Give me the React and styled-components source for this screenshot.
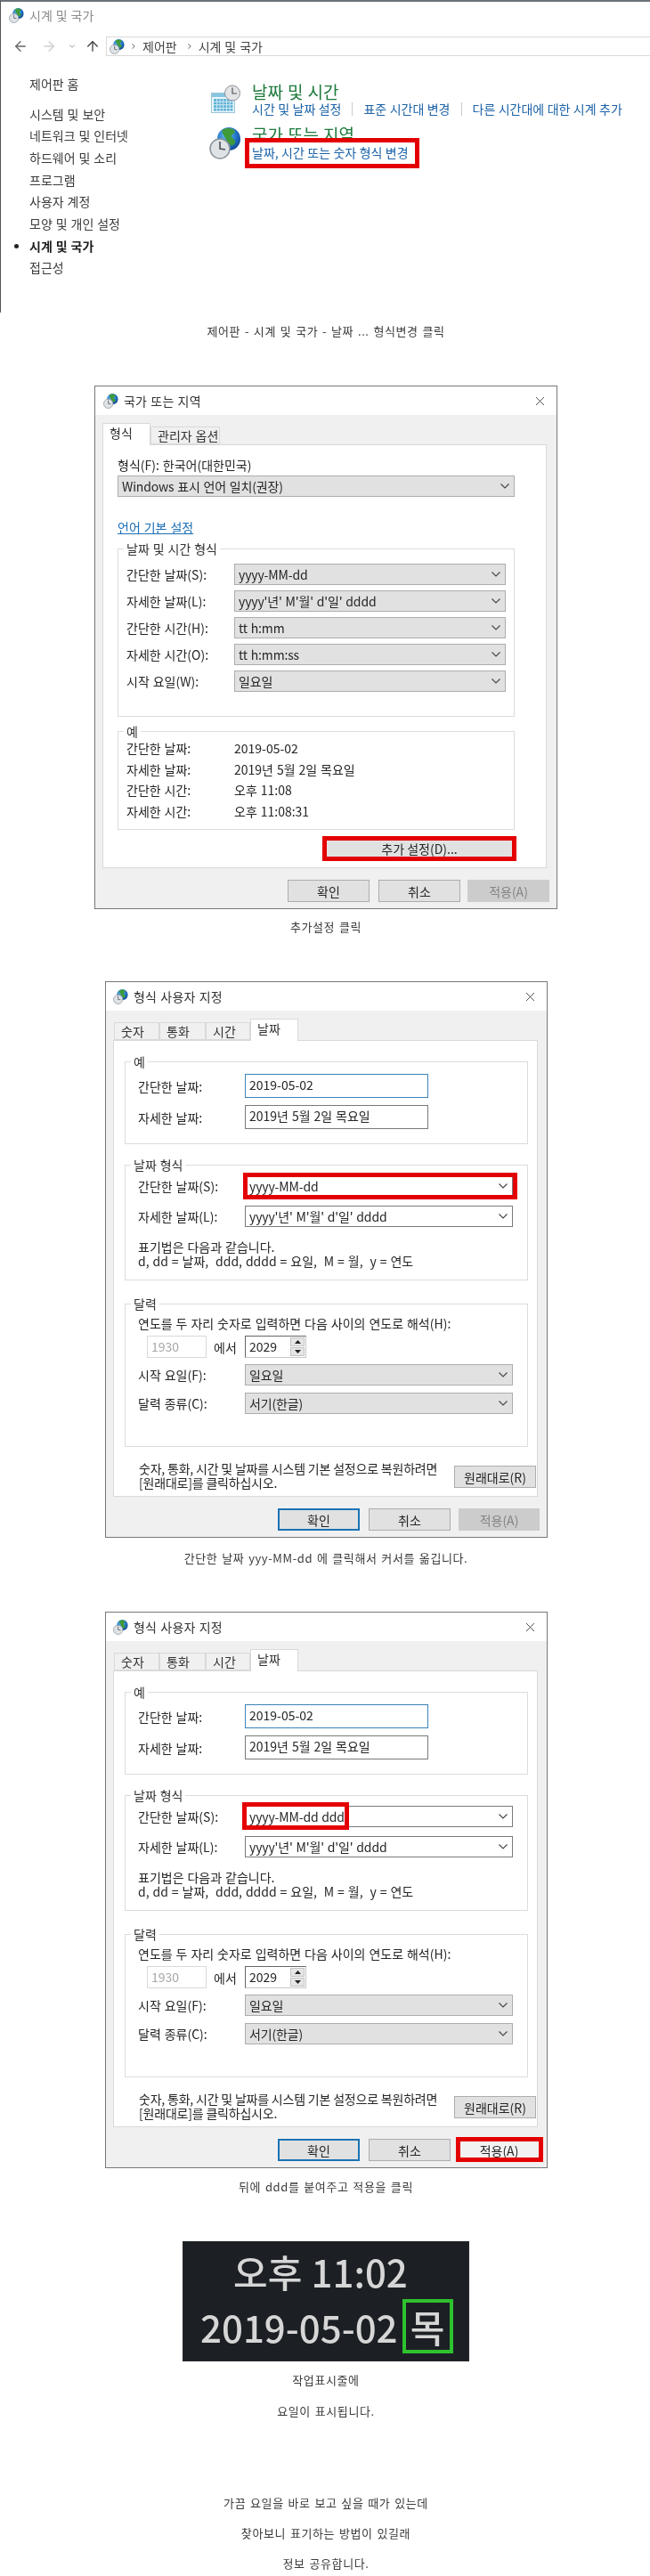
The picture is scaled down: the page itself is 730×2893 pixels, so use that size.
import React from "react";
import styled, { createGlobalStyle } from "styled-components";
import { ArrowLeft, ArrowRight, ArrowUp, ChevronDown, ChevronRight, X } from "lucide-react";

const GlobalStyle = createGlobalStyle`
  html, body { margin: 0; padding: 0; background: #fff; }
  * { box-sizing: border-box; }
  body { font-family: "Noto Sans CJK KR", "Noto Sans", sans-serif; color: #262626; font-size: 14px; word-spacing: 0.8px; }
`;

const Page = styled.div`
  width: 730px;
  height: 2893px;
  overflow: hidden;
  background: #fff;
  filter: blur(0.3px);
`;

const Caption = styled.p`
  margin: ${(p) => p.$top || 0}px 0 0;
  padding-left: 2px;
  height: ${(p) => p.$h || 34}px;
  line-height: ${(p) => p.$h || 34}px;
  text-align: center;
  font-size: 13px;
  letter-spacing: 0.6px;
  word-spacing: 1.3px;
  color: #3a3a3a;
  white-space: nowrap;
`;

/* ---------- control panel ---------- */
const ControlPanel = styled.section`
  height: 351px;
  border-left: 1px solid #555;
  border-top: 2px solid #6c7278;
`;
const WindowTitle = styled.div`
  height: 30px;
  padding-left: 9px;
  display: flex;
  align-items: center;
  gap: 6px;
  color: #8c8c8c;
`;
const NavRow = styled.div`
  margin-top: 9px;
  height: 22px;
  padding-left: 13px;
  display: flex;
  align-items: center;
  color: #555;
`;
const NavIcon = styled.span`
  display: flex;
  margin-left: ${(p) => p.$gap || 0}px;
  color: ${(p) => p.$color || "#555"};
`;
const AddressBar = styled.div`
  flex: 1;
  height: 22px;
  margin-left: 6px;
  padding-left: 3px;
  border: 1px solid #d9d9d9;
  border-right: none;
  display: flex;
  align-items: center;
  gap: 5px;
  line-height: 18px;
  color: #444;
`;
const Crumb = styled.span`
  margin-right: 4px;
`;
const PanelContent = styled.div`
  display: flex;
  padding-top: 18.6px;
`;
const Sidebar = styled.nav`
  width: 234px;
  padding-left: 32px;
  display: flex;
  flex-direction: column;
`;
const SideItem = styled.div`
  position: relative;
  height: 24.7px;
  line-height: 24.7px;
  margin-bottom: ${(p) => (p.$home ? 9.3 : 0)}px;
  font-weight: ${(p) => (p.$active ? 700 : 400)};
  color: ${(p) => (p.$active ? "#1f1f1f" : "#3c3c3c")};
  &::before {
    content: ${(p) => (p.$active ? '""' : "none")};
    position: absolute;
    left: -17px;
    top: 10px;
    width: 5px;
    height: 5px;
    border-radius: 50%;
    background: #222;
  }
`;
const Categories = styled.div`
  flex: 1;
  display: flex;
  flex-direction: column;
  padding-top: 9.9px;
`;
const Category = styled.div`
  display: flex;
  gap: 0;
  height: ${(p) => p.$h}px;
`;
const CatIcon = styled.div`
  width: 48px;
  padding-top: ${(p) => p.$top}px;
  padding-left: ${(p) => p.$left}px;
`;
const CatBody = styled.div`
  display: flex;
  flex-direction: column;
`;
const CatHeading = styled.div`
  font-size: 19px;
  line-height: 23px;
  height: ${(p) => p.$clip || 23}px;
  overflow: ${(p) => (p.$clip ? "hidden" : "visible")};
  color: #1d7a3c;
  white-space: nowrap;
`;
const CatLinks = styled.div`
  display: flex;
  gap: 12px;
  align-items: center;
  height: 16px;
  color: #1c63a8;
  white-space: nowrap;
  word-spacing: 0.3px;
`;
const CatSep = styled.span`
  width: 1px;
  height: 15px;
  background: #ccc;
`;
const RedLinkBox = styled.div`
  margin-left: -8px;
  width: 196px;
  height: 34px;
  border: 5px solid #e40000;
  background: #fff;
  padding-left: 3px;
  line-height: 23px;
  color: #1c63a8;
  white-space: nowrap;
  word-spacing: 0.3px;
`;

/* ---------- dialog ---------- */
const Dialog = styled.section`
  margin: ${(p) => p.$top}px 0 0 ${(p) => p.$left}px;
  width: ${(p) => p.$w}px;
  border: 1px solid #777;
  display: flex;
  flex-direction: column;
  background: #f0f0f0;
`;
const TitleBar = styled.header`
  height: 32px;
  padding: 0 10px 0 ${(p) => p.$pad}px;
  background: #fff;
  display: flex;
  align-items: center;
  gap: 6px;
  color: #333;
`;
const TitleText = styled.span`
  flex: 1;
  letter-spacing: 0.2px;
`;
const TabStrip = styled.div`
  height: 33px;
  padding-left: ${(p) => p.$pad}px;
  display: flex;
  align-items: flex-end;
`;
const Tab = styled.div`
  width: ${(p) => p.$w}px;
  height: ${(p) => (p.$active ? 25 : 20)}px;
  margin-bottom: ${(p) => (p.$active ? -1 : 0)}px;
  padding-left: 7px;
  line-height: ${(p) => (p.$active ? 21 : 19)}px;
  position: relative;
  background: ${(p) => (p.$active ? "#fff" : "#f0f0f0")};
  border: 1px solid #d9d9d9;
  border-bottom: ${(p) => (p.$active ? "none" : "1px solid #d9d9d9")};
  color: #333;
  white-space: nowrap;
`;
const TabPanel = styled.div`
  margin-left: 8px;
  width: ${(p) => p.$w}px;
  height: ${(p) => p.$h}px;
  background: #fff;
  border: 1px solid #d9d9d9;
  padding: ${(p) => p.$pad};
`;
const PlainLabel = styled.div`
  line-height: 16px;
  white-space: nowrap;
`;
const Select = styled.div`
  position: relative;
  width: ${(p) => p.$w}px;
  height: 24px;
  margin-top: ${(p) => p.$top || 0}px;
  padding: 0 5px 0 4px;
  display: flex;
  align-items: center;
  justify-content: space-between;
  line-height: 20px;
  background: ${(p) => (p.$white ? "#fff" : "#e1e1e1")};
  border: 1px solid ${(p) => (p.$white ? "#7a7a7a" : "#adadad")};
  white-space: nowrap;
  letter-spacing: -0.15px;
`;
const Highlight = styled.div`
  position: absolute;
  top: ${(p) => p.$t}px;
  left: ${(p) => p.$l}px;
  right: ${(p) => (p.$wd ? "auto" : `${p.$r}px`)};
  width: ${(p) => (p.$wd ? `${p.$wd}px` : "auto")};
  bottom: ${(p) => p.$b}px;
  border: 5px solid #e40000;
`;
const DocLink = styled.a`
  display: block;
  margin-top: ${(p) => p.$top}px;
  line-height: 16px;
  color: #1c6fb5;
  text-decoration: underline;
`;
const Group = styled.div`
  position: relative;
  margin-top: ${(p) => p.$top}px;
  width: ${(p) => p.$w}px;
  height: ${(p) => p.$h}px;
  border: 1px solid #dcdcdc;
  padding: ${(p) => p.$pt}px 0 0 ${(p) => p.$pl}px;
`;
const Legend = styled.span`
  position: absolute;
  top: -10px;
  left: 6px;
  padding: 0 3px;
  line-height: 18px;
  background: #fff;
  color: #333;
`;
const FieldRow = styled.div`
  display: grid;
  grid-template-columns: ${(p) => p.$col}px auto;
  justify-content: start;
  align-items: center;
  margin-top: ${(p) => p.$top || 0}px;
  white-space: nowrap;
`;
const ExampleRow = styled.div`
  display: grid;
  grid-template-columns: 121px auto;
  justify-content: start;
  height: 23.7px;
  line-height: 23.7px;
  white-space: nowrap;
`;
const Button = styled.button`
  position: relative;
  width: ${(p) => p.$w}px;
  height: ${(p) => p.$h || 25}px;
  margin: ${(p) => p.$m || 0};
  padding: 0;
  display: block;
  font: inherit;
  font-size: 14px;
  line-height: 18px;
  background: ${(p) => (p.$off ? "#cccccc" : p.$light ? "#f2f2f2" : "#e1e1e1")};
  border: ${(p) => (p.$def ? "2px solid #1a73b5" : p.$off ? "1px solid #cccccc" : "1px solid #adadad")};
  color: ${(p) => (p.$off ? "#858585" : "#262626")};
`;
const Footer = styled.footer`
  height: 45px;
  padding: 13px 8px 7px 0;
  display: flex;
  justify-content: flex-end;
  gap: ${(p) => p.$gap || 0}px;
`;
const InputBox = styled.div`
  width: 206px;
  height: 27px;
  padding: 0 0 3px 4px;
  display: flex;
  align-items: center;
  line-height: 20px;
  border: 1px solid ${(p) => (p.$focus ? "#3b84b8" : "#7a7a7a")};
  white-space: nowrap;
`;
const Notes = styled.div`
  margin-top: 14px;
  line-height: 16px;
  white-space: nowrap;
`;
const SpinRow = styled.div`
  margin-top: 6px;
  display: grid;
  grid-template-columns: 120px auto;
  justify-content: start;
  align-items: center;
`;
const SpinLeft = styled.div`
  padding-left: 10px;
  display: flex;
  align-items: center;
  gap: 8px;
`;
const DisabledInput = styled.div`
  width: 67px;
  height: 25px;
  padding-left: 4px;
  line-height: 22px;
  border: 1px solid #d9d9d9;
  color: #a8a8a8;
`;
const SpinInput = styled.div`
  width: 69px;
  height: 25px;
  display: flex;
  border: 1px solid #c8c8c8;
  border-left-color: #666;
  border-top-color: #666;
`;
const SpinValue = styled.span`
  flex: 1;
  padding-left: 4px;
  line-height: 22px;
`;
const SpinButtons = styled.div`
  width: 18px;
  display: flex;
  flex-direction: column;
  gap: 1px;
  padding: 1px;
`;
const SpinButton = styled.div`
  flex: 1;
  display: flex;
  align-items: center;
  justify-content: center;
  background: #e6e6e6;
  border: 1px solid #c4c4c4;
`;
const ResetRow = styled.div`
  margin: 16px 0 0 16px;
  width: 446px;
  display: flex;
  justify-content: space-between;
  align-items: flex-start;
`;
const ResetText = styled.div`
  line-height: 16px;
  white-space: nowrap;
  word-spacing: 0;
  letter-spacing: -0.2px;
`;

/* ---------- taskbar clock ---------- */
const TaskbarClock = styled.section`
  margin: 44px 0 0 205px;
  width: 322px;
  height: 135px;
  background: #1c2024;
  color: #d6d6d6;
  font-size: 42px;
  font-weight: 500;
  border: 1px solid #26292c;
`;
const ClockTime = styled.div`
  height: 64px;
  padding: 4px 0 0 56px;
  line-height: 58px;
  white-space: nowrap;
  filter: blur(0.7px);
`;
const ClockDateRow = styled.div`
  display: flex;
  padding-left: 19px;
  gap: 5px;
  align-items: center;
  line-height: 58px;
  white-space: nowrap;
`;
const ClockDate = styled.span`
  filter: blur(0.7px);
`;
const DayBox = styled.div`
  width: 57px;
  height: 61px;
  border: 4px solid #2ec22e;
  display: flex;
  align-items: center;
  justify-content: center;
  line-height: 1;
`;
const DayText = styled.span`
  filter: blur(0.7px);
`;

/* ---------- drawings ---------- */
const GlobeClock = ({ size = 17 }) => (
  <svg width={size} height={size} viewBox="0 0 36 36" style={{ display: "block", flexShrink: 0 }}>
    <defs>
      <radialGradient id="globeFill" cx="0.4" cy="0.35" r="0.75">
        <stop offset="0" stopColor="#6cc4f0" />
        <stop offset="0.6" stopColor="#1f6fc4" />
        <stop offset="1" stopColor="#0c3a80" />
      </radialGradient>
    </defs>
    <circle cx="22" cy="13" r="13" fill="url(#globeFill)" />
    <path d="M15 3c4-3 10-2 13 0 3 3-3 4-3 7s5 3 4 7-5 4-6 2-4-4-5-7-5-6-3-9z" fill="#3f9a3a" />
    <circle cx="12" cy="24" r="11" fill="#dfe3e6" stroke="#8a949c" strokeWidth="1.5" />
    <path d="M12 16v8l6 1" fill="none" stroke="#4a5056" strokeWidth="1.6" />
  </svg>
);

const CalendarClock = () => (
  <svg width="33" height="33" viewBox="0 0 33 33" style={{ display: "block" }}>
    <rect x="0.5" y="9.5" width="26" height="22" fill="#eaf6fb" stroke="#9cc4d6" />
    <rect x="1" y="10" width="25" height="4" fill="#86c6e2" />
    <g fill="#63b4d8">
      {[0, 1, 2, 3].map((r) =>
        [0, 1, 2, 3, 4, 5].map((c) => (
          <rect key={`${r}-${c}`} x={3 + c * 3.7} y={16 + r * 3.6} width="3" height="2.8" />
        ))
      )}
    </g>
    <circle cx="24" cy="9.5" r="8.5" fill="#e2e4e6" stroke="#8c9298" />
    <path d="M24 3.5v6.5h5" fill="none" stroke="#555" strokeWidth="1.2" />
  </svg>
);

const SelectArrow = () => (
  <svg width="10" height="6" viewBox="0 0 10 6" style={{ flexShrink: 0 }}>
    <path d="M0.5 0.5 5 5l4.5-4.5" fill="none" stroke="#444" strokeWidth="1.1" />
  </svg>
);

const SpinGlyph = ({ down }) => (
  <svg width="7" height="4" viewBox="0 0 7 4" style={{ display: "block" }}>
    <path d={down ? "M0 0h7L3.5 4z" : "M0 4h7L3.5 0z"} fill="#222" />
  </svg>
);

const Combo = ({ w, white, top, children, highlight }) => (
  <Select $w={w} $white={white} $top={top}>
    <span>{children}</span>
    <SelectArrow />
    {highlight}
  </Select>
);

/* ---------- dialogs ---------- */
const RegionDialog = () => (
  <Dialog $top={44} $left={106} $w={520}>
    <TitleBar $pad={9}>
      <GlobeClock />
      <TitleText>국가 또는 지역</TitleText>
      <X size={17} strokeWidth={1.2} color="#333" />
    </TitleBar>
    <TabStrip $pad={8}>
      <Tab $active $w={54}>형식</Tab>
      <Tab $w={78}>관리자 옵션</Tab>
    </TabStrip>
    <TabPanel $w={499} $h={476} $pad="14px 0 0 16px">
      <PlainLabel>형식(F): 한국어(대한민국)</PlainLabel>
      <Combo w={446} top={4}>Windows 표시 언어 일치(권장)</Combo>
      <DocLink $top={26}>언어 기본 설정</DocLink>
      <Group $top={16} $w={446} $h={189} $pt={16} $pl={9}>
        <Legend>날짜 및 시간 형식</Legend>
        <FieldRow $col={121}>간단한 날짜(S):<Combo w={305}>yyyy-MM-dd</Combo></FieldRow>
        <FieldRow $col={121} $top={6}>자세한 날짜(L):<Combo w={305}>yyyy'년' M'월' d'일' dddd</Combo></FieldRow>
        <FieldRow $col={121} $top={6}>간단한 시간(H):<Combo w={305}>tt h:mm</Combo></FieldRow>
        <FieldRow $col={121} $top={6}>자세한 시간(O):<Combo w={305}>tt h:mm:ss</Combo></FieldRow>
        <FieldRow $col={121} $top={6}>시작 요일(W):<Combo w={305}>일요일</Combo></FieldRow>
      </Group>
      <Group $top={16} $w={446} $h={111} $pt={7} $pl={9}>
        <Legend>예</Legend>
        <ExampleRow><span>간단한 날짜:</span><span>2019-05-02</span></ExampleRow>
        <ExampleRow><span>자세한 날짜:</span><span>2019년 5월 2일 목요일</span></ExampleRow>
        <ExampleRow><span>간단한 시간:</span><span>오후 11:08</span></ExampleRow>
        <ExampleRow><span>자세한 시간:</span><span>오후 11:08:31</span></ExampleRow>
      </Group>
      <Button $w={212} $h={24} $m="9px 0 0 233px">
        추가 설정(D)...
        <Highlight $t={-3} $l={-4} $r={-4} $b={-3} />
      </Button>
    </TabPanel>
    <Footer>
      <Button $w={92} $m="0 10px 0 0">확인</Button>
      <Button $w={92} $m="0 8px 0 0">취소</Button>
      <Button $w={92} $off>적용(A)</Button>
    </Footer>
  </Dialog>
);

const FormatDialog = ({ top, applied }) => (
  <Dialog $top={top} $left={118} $w={497}>
    <TitleBar $pad={8}>
      <GlobeClock />
      <TitleText>형식 사용자 지정</TitleText>
      <X size={17} strokeWidth={1.2} color="#333" />
    </TitleBar>
    <TabStrip $pad={9}>
      <Tab $w={51}>숫자</Tab>
      <Tab $w={52}>통화</Tab>
      <Tab $w={50}>시간</Tab>
      <Tab $active $w={54}>날짜</Tab>
    </TabStrip>
    <TabPanel $w={477} $h={513} $pad="23px 0 0 12px">
      <Group $w={453} $h={93} $pt={13} $pl={14}>
        <Legend>예</Legend>
        <FieldRow $col={120}>간단한 날짜:<InputBox $focus>2019-05-02</InputBox></FieldRow>
        <FieldRow $col={120} $top={8}>자세한 날짜:<InputBox>2019년 5월 2일 목요일</InputBox></FieldRow>
      </Group>
      <Group $top={23} $w={453} $h={130} $pt={11} $pl={14}>
        <Legend>날짜 형식</Legend>
        <FieldRow $col={120}>
          간단한 날짜(S):
          {applied ? (
            <Combo white w={301} highlight={<Highlight $t={-5} $l={-4} $wd={120} $b={-4} />}>yyyy-MM-dd ddd</Combo>
          ) : (
            <Combo white w={301} highlight={<Highlight $t={-4} $l={-3} $r={-6} $b={-4} />}>yyyy-MM-dd</Combo>
          )}
        </FieldRow>
        <FieldRow $col={120} $top={10}>자세한 날짜(L):<Combo white w={301}>yyyy'년' M'월' d'일' dddd</Combo></FieldRow>
        <Notes>
          표기법은 다음과 같습니다.
          <br />
          d, dd = 날짜,&nbsp; ddd, dddd = 요일,&nbsp; M = 월,&nbsp; y = 연도
        </Notes>
      </Group>
      <Group $top={26} $w={453} $h={161} $pt={13} $pl={14}>
        <Legend>달력</Legend>
        <PlainLabel>연도를 두 자리 숫자로 입력하면 다음 사이의 연도로 해석(H):</PlainLabel>
        <SpinRow>
          <SpinLeft>
            <DisabledInput>1930</DisabledInput>
            <span>에서</span>
          </SpinLeft>
          <SpinInput>
            <SpinValue>2029</SpinValue>
            <SpinButtons>
              <SpinButton><SpinGlyph /></SpinButton>
              <SpinButton><SpinGlyph down /></SpinButton>
            </SpinButtons>
          </SpinInput>
        </SpinRow>
        <FieldRow $col={120} $top={7}>시작 요일(F):<Combo w={301}>일요일</Combo></FieldRow>
        <FieldRow $col={120} $top={8}>달력 종류(C):<Combo w={301}>서기(한글)</Combo></FieldRow>
      </Group>
      <ResetRow>
        <ResetText>
          숫자, 통화, 시간 및 날짜를 시스템 기본 설정으로 복원하려면
          <br />
          [원래대로]를 클릭하십시오.
        </ResetText>
        <Button $w={92} $m="5px 0 0 0">원래대로(R)</Button>
      </ResetRow>
    </TabPanel>
    <Footer>
      <Button $def $w={92} $m="0 10px 0 0">확인</Button>
      <Button $w={92} $m="0 9px 0 0">취소</Button>
      {applied ? (
        <Button $w={91} $light>
          적용(A)
          <Highlight $t={-3} $l={-4} $r={-5} $b={-2} />
        </Button>
      ) : (
        <Button $w={91} $off>적용(A)</Button>
      )}
    </Footer>
  </Dialog>
);

export default function App() {
  return (
    <Page>
      <GlobalStyle />
      <ControlPanel>
        <WindowTitle>
          <GlobeClock />
          <span>시계 및 국가</span>
        </WindowTitle>
        <NavRow>
          <NavIcon $color="#666"><ArrowLeft size={18} strokeWidth={1.8} /></NavIcon>
          <NavIcon $gap={14} $color="#cfcfcf"><ArrowRight size={18} strokeWidth={1.8} /></NavIcon>
          <NavIcon $gap={12} $color="#888"><ChevronDown size={10} strokeWidth={2} /></NavIcon>
          <NavIcon $gap={9} $color="#444"><ArrowUp size={18} strokeWidth={1.8} /></NavIcon>
          <AddressBar>
            <GlobeClock />
            <ChevronRight size={10} strokeWidth={2} />
            <Crumb>제어판</Crumb>
            <ChevronRight size={10} strokeWidth={2} />
            <Crumb>시계 및 국가</Crumb>
          </AddressBar>
        </NavRow>
        <PanelContent>
          <Sidebar>
            <SideItem $home>제어판 홈</SideItem>
            <SideItem>시스템 및 보안</SideItem>
            <SideItem>네트워크 및 인터넷</SideItem>
            <SideItem>하드웨어 및 소리</SideItem>
            <SideItem>프로그램</SideItem>
            <SideItem>사용자 계정</SideItem>
            <SideItem>모양 및 개인 설정</SideItem>
            <SideItem $active>시계 및 국가</SideItem>
            <SideItem>접근성</SideItem>
          </Sidebar>
          <Categories>
            <Category $h={48}>
              <CatIcon $top={4} $left={2}><CalendarClock /></CatIcon>
              <CatBody>
                <CatHeading>날짜 및 시간</CatHeading>
                <CatLinks>
                  <span>시간 및 날짜 설정</span>
                  <CatSep />
                  <span>표준 시간대 변경</span>
                  <CatSep />
                  <span>다른 시간대에 대한 시계 추가</span>
                </CatLinks>
              </CatBody>
            </Category>
            <Category $h={50}>
              <CatIcon $top={4} $left={0}><GlobeClock size={36} /></CatIcon>
              <CatBody>
                <CatHeading $clip={15.5}>국가 또는 지역</CatHeading>
                <RedLinkBox>날짜, 시간 또는 숫자 형식 변경</RedLinkBox>
              </CatBody>
            </Category>
          </Categories>
        </PanelContent>
      </ControlPanel>
      <Caption $top={4}>제어판 - 시계 및 국가 - 날짜 ... 형식변경 클릭</Caption>

      <RegionDialog />
      <Caption $top={3}>추가설정 클릭</Caption>

      <FormatDialog top={44} />
      <Caption $top={6}>간단한 날짜 yyy-MM-dd 에 클릭해서 커서를 옮깁니다.</Caption>

      <FormatDialog top={43} applied />
      <Caption $top={4}>뒤에 ddd를 붙여주고 적용을 클릭</Caption>

      <TaskbarClock>
        <ClockTime>오후 11:02</ClockTime>
        <ClockDateRow>
          <ClockDate>2019-05-02</ClockDate>
          <DayBox><DayText>목</DayText></DayBox>
        </ClockDateRow>
      </TaskbarClock>
      <Caption $top={4}>작업표시줄에</Caption>
      <Caption $top={1}>요일이 표시됩니다.</Caption>
      <Caption $top={69}>가끔 요일을 바로 보고 싶을 때가 있는데</Caption>
      <Caption>찾아보니 표기하는 방법이 있길래</Caption>
      <Caption>정보 공유합니다.</Caption>
    </Page>
  );
}
